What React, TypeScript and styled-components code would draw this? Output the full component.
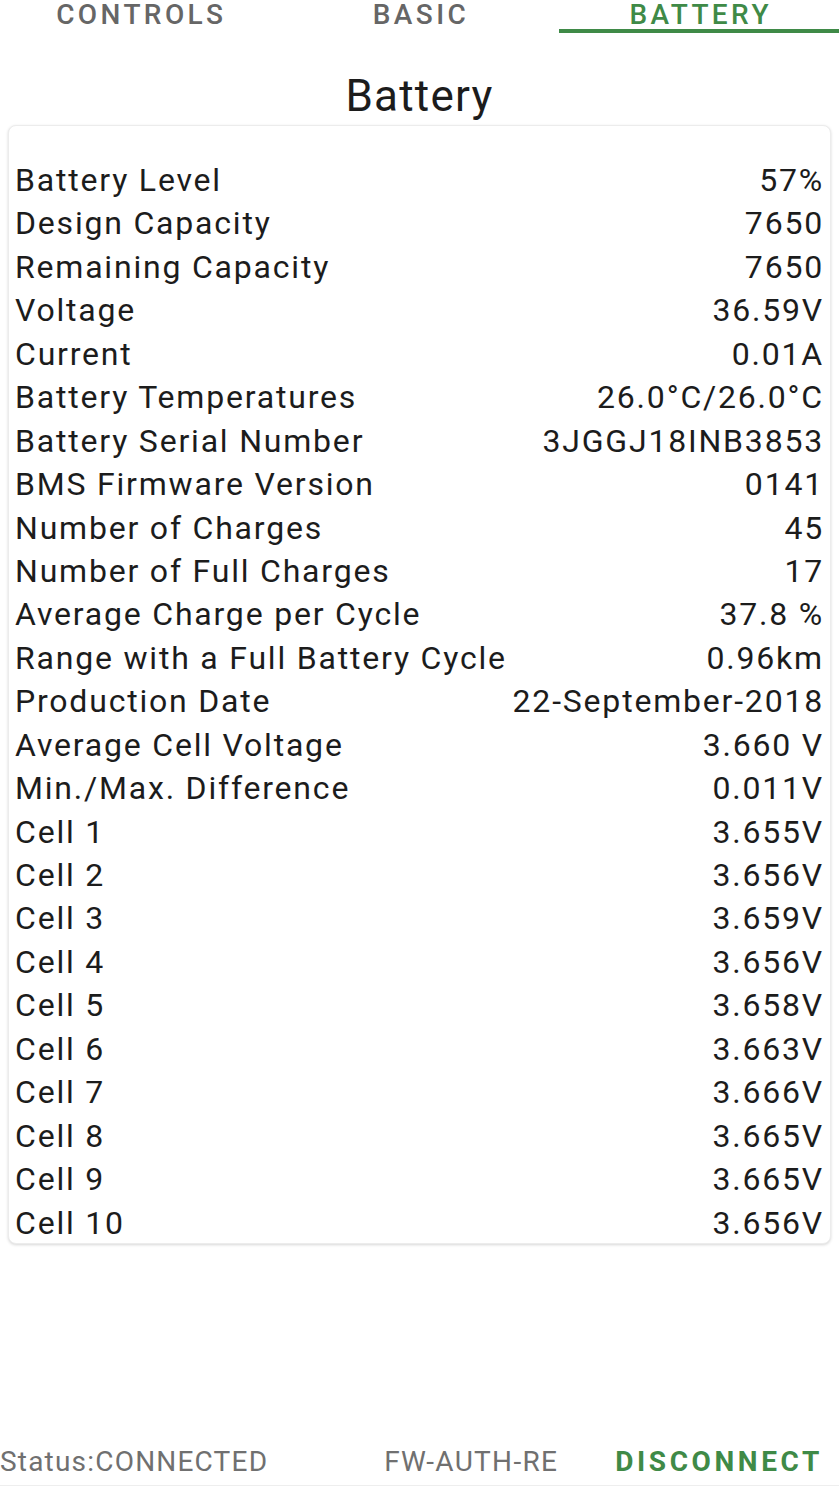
import React, { useState } from 'react';
import styled, { createGlobalStyle } from 'styled-components';

const GlobalStyle = createGlobalStyle`
  html, body {
    margin: 0;
    padding: 0;
    background: #ffffff;
    font-family: Roboto, "Noto Sans", sans-serif;
  }
`;

const rows: [string, string][] = [
  ['Battery Level', '57%'],
  ['Design Capacity', '7650'],
  ['Remaining Capacity', '7650'],
  ['Voltage', '36.59V'],
  ['Current', '0.01A'],
  ['Battery Temperatures', '26.0°C/26.0°C'],
  ['Battery Serial Number', '3JGGJ18INB3853'],
  ['BMS Firmware Version', '0141'],
  ['Number of Charges', '45'],
  ['Number of Full Charges', '17'],
  ['Average Charge per Cycle', '37.8 %'],
  ['Range with a Full Battery Cycle', '0.96km'],
  ['Production Date', '22-September-2018'],
  ['Average Cell Voltage', '3.660 V'],
  ['Min./Max. Difference', '0.011V'],
  ['Cell 1', '3.655V'],
  ['Cell 2', '3.656V'],
  ['Cell 3', '3.659V'],
  ['Cell 4', '3.656V'],
  ['Cell 5', '3.658V'],
  ['Cell 6', '3.663V'],
  ['Cell 7', '3.666V'],
  ['Cell 8', '3.665V'],
  ['Cell 9', '3.665V'],
  ['Cell 10', '3.656V'],
];

const tabs = ['CONTROLS', 'BASIC', 'BATTERY'];

const App: React.FC = () => {
  const [active, setActive] = useState('BATTERY');

  return (
    <Screen>
      <GlobalStyle />
      <TabBar>
        {tabs.map((tab) => (
          <Tab key={tab} $active={tab === active} onClick={() => setActive(tab)}>
            {tab}
          </Tab>
        ))}
      </TabBar>
      <Title>Battery</Title>
      <Card>
        {rows.map(([label, value]) => (
          <Row key={label}>
            <Label>{label}</Label>
            <Value>{value}</Value>
          </Row>
        ))}
      </Card>
      <Spacer />
      <BottomBar>
        <Status>Status:CONNECTED</Status>
        <TextButton>FW-AUTH-RE</TextButton>
        <DisconnectButton>DISCONNECT</DisconnectButton>
      </BottomBar>
    </Screen>
  );
};

const Screen = styled.div`
  width: 839px;
  height: 1492px;
  display: flex;
  flex-direction: column;
  overflow: hidden;
  background: #ffffff;
`;

const TabBar = styled.div`
  display: grid;
  grid-template-columns: repeat(3, 1fr);
  height: 33px;
`;

const Tab = styled.div<{ $active: boolean }>`
  display: flex;
  justify-content: center;
  align-items: flex-start;
  padding-left: 3px;
  font-size: 28px;
  font-weight: 500;
  letter-spacing: 3.4px;
  line-height: 29px;
  color: ${(p) => (p.$active ? '#3f8a47' : '#666666')};
  border-bottom: 4px solid ${(p) => (p.$active ? '#3f8a47' : 'transparent')};
  cursor: pointer;
`;

const Title = styled.h1`
  margin: 36px 0 1px;
  text-align: center;
  font-size: 44px;
  font-weight: 400;
  letter-spacing: 1.2px;
  line-height: 55px;
  color: #1c1c1c;
`;

const Card = styled.div`
  margin: 0 8px;
  padding: 33px 6px 0 6px;
  border-radius: 8px;
  border: 1px solid #ececec;
  box-shadow: 0 1px 3px rgba(0, 0, 0, 0.16);
  background: #ffffff;
`;

const Row = styled.div`
  display: flex;
  justify-content: space-between;
  align-items: baseline;
  height: 43.45px;
  line-height: 43.45px;
  font-size: 32px;
  letter-spacing: 1.8px;
  color: #1c1c1c;

  &:last-child {
    height: 41.5px;
  }
`;

const Label = styled.span`
  white-space: nowrap;
`;

const Value = styled.span`
  white-space: nowrap;
  text-align: right;
`;

const Spacer = styled.div`
  flex: 1;
`;

const BottomBar = styled.div`
  display: flex;
  align-items: center;
  height: 48px;
  margin-bottom: 6px;
  border-bottom: 1px solid #eeeeee;
  font-size: 28px;
`;

const Status = styled.div`
  flex: 1;
  color: #707070;
  letter-spacing: 1.2px;
  white-space: nowrap;
`;

const TextButton = styled.div`
  padding-right: 57px;
  color: #707070;
  letter-spacing: 1.3px;
  white-space: nowrap;
`;

const DisconnectButton = styled.div`
  padding-right: 16px;
  color: #3f8a47;
  font-weight: 700;
  letter-spacing: 3.6px;
  white-space: nowrap;
`;

export default App;
